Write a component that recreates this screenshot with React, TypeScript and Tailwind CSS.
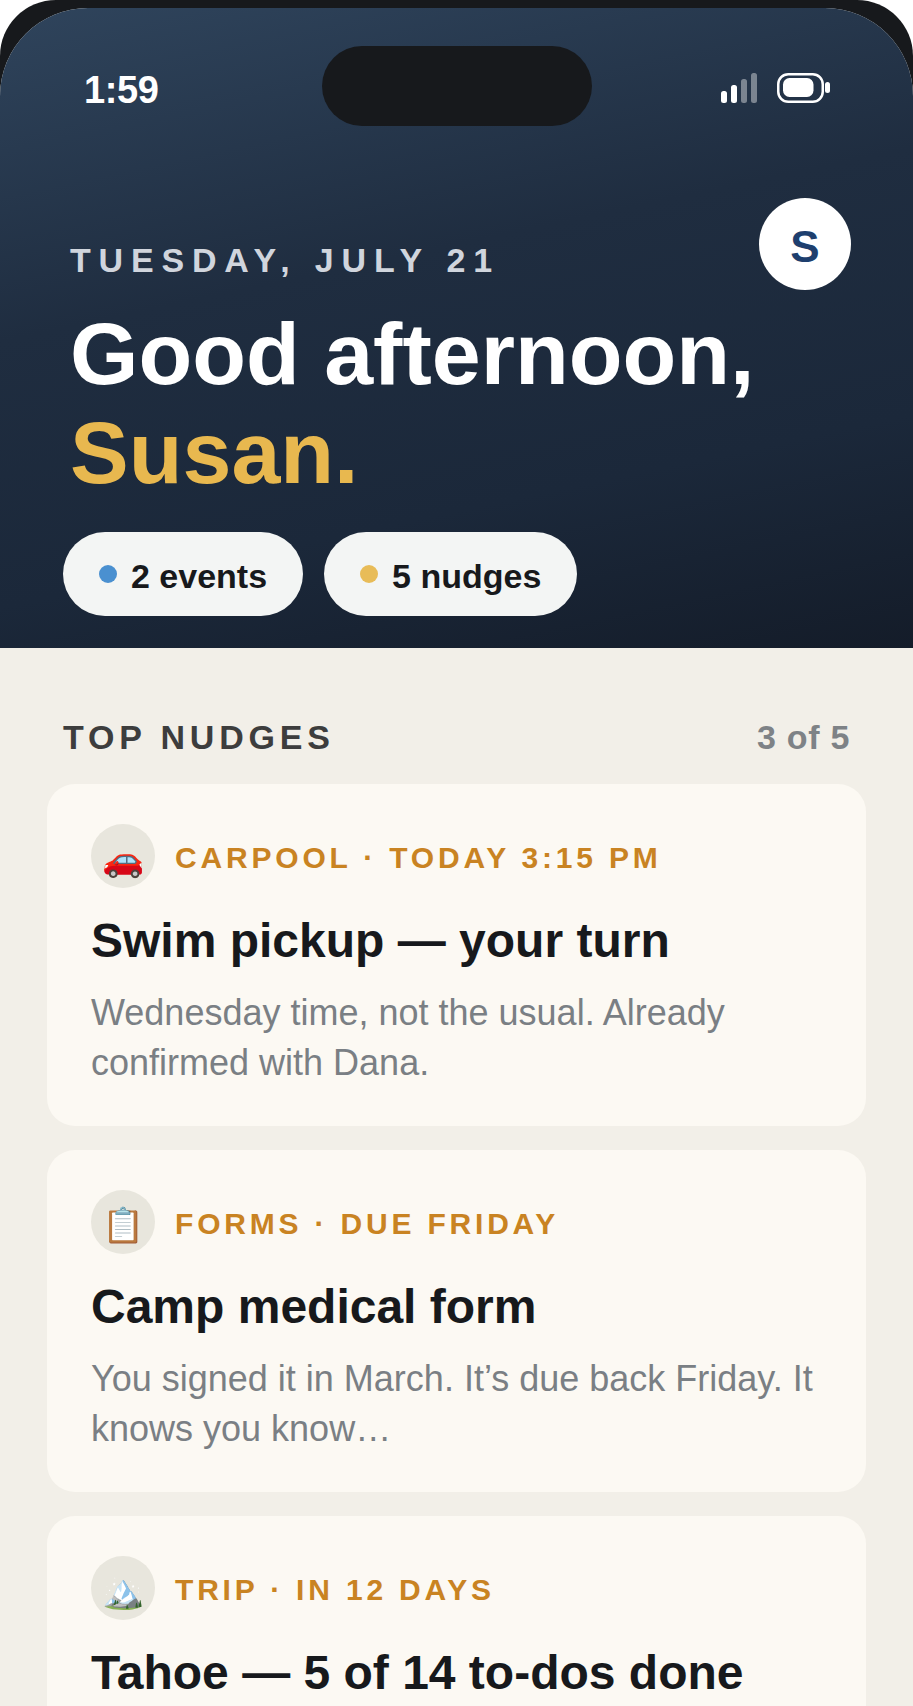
const FONT = "font-['Liberation_Sans',Arial,sans-serif]";

const nudges = [
  {
    emoji: "🚗",
    label: "CARPOOL · TODAY 3:15 PM",
    title: "Swim pickup — your turn",
    body: "Wednesday time, not the usual. Already confirmed with Dana.",
  },
  {
    emoji: "📋",
    label: "FORMS · DUE FRIDAY",
    title: "Camp medical form",
    body: "You signed it in March. It’s due back Friday. It knows you know…",
  },
  {
    emoji: "🏔️",
    label: "TRIP · IN 12 DAYS",
    title: "Tahoe — 5 of 14 to-dos done",
  },
];

function StatusIcons() {
  return (
    <div className="mt-0.5 flex items-start">
      <svg width="36" height="30" viewBox="0 0 36 30" fill="#fff">
        <rect x="0" y="18" width="6" height="12" rx="2.5" />
        <rect x="10" y="12" width="6" height="18" rx="2.5" />
        <rect x="20" y="6" width="6" height="24" rx="2.5" opacity="0.4" />
        <rect x="30" y="0" width="6" height="30" rx="2.5" opacity="0.4" />
      </svg>
      <svg className="ml-5" width="53" height="30" viewBox="0 0 53 30" fill="none">
        <rect x="1.25" y="1.25" width="44.5" height="27.5" rx="10" stroke="#fff" strokeWidth="2.5" />
        <rect x="6" y="5" width="30.5" height="19" rx="6.5" fill="#fff" />
        <rect x="48" y="9" width="5" height="11" rx="2.5" fill="#fff" />
      </svg>
    </div>
  );
}

function Pill({ dot, text }: { dot: string; text: string }) {
  return (
    <div className="flex h-[84px] items-center gap-[14px] rounded-full bg-[#f3f5f4] px-9 text-[34px] font-bold text-[#17191c]">
      <span className={`h-[18px] w-[18px] rounded-full ${dot}`} />
      <span className="pt-1">{text}</span>
    </div>
  );
}

function NudgeCard({ emoji, label, title, body }: { emoji: string; label: string; title: string; body?: string }) {
  return (
    <div className="rounded-[28px] bg-[#fcf9f3] px-11 pb-[38px] pt-10">
      <div className="flex items-center gap-5">
        <div className="flex h-16 w-16 items-center justify-center rounded-full bg-[#e8e6dd] pt-1.5 text-[34px] leading-none">
          {emoji}
        </div>
        <span className="pt-[3px] text-[30px] font-bold tracking-[0.127em] text-[#c98322]">{label}</span>
      </div>
      <h2 className="mt-[23px] text-[48px] font-bold leading-[60px] text-[#17191c]">{title}</h2>
      {body && <p className="mt-[17px] text-[36px] leading-[50px] text-[#7a7f84]">{body}</p>}
    </div>
  );
}

export default function App() {
  return (
    <div className={`h-[1706px] w-[913px] overflow-hidden bg-white ${FONT}`}>
      <div className="h-full overflow-hidden rounded-t-[56px] bg-[#17191c] pt-2">
        <div className="h-full overflow-hidden rounded-t-[88px] bg-[#f2efe8]">
          <header className="relative h-[640px] bg-[linear-gradient(168deg,#2f445c_0%,#1f2d40_40%,#1b283a_72%,#141c29_100%)] pl-[70px] text-white">
            <div className="absolute left-[322px] top-[38px] h-20 w-[270px] rounded-full bg-[#17191c]" />
            <div className="flex items-start justify-between pl-3.5 pr-[83px] pt-[63px]">
              <span className="text-[38px] font-bold leading-[38px] tracking-[-0.01em]">1:59</span>
              <StatusIcons />
            </div>
            <div className="absolute right-[62px] top-[190px] flex h-[92px] w-[92px] items-center justify-center rounded-full bg-white pt-[5px] text-[44px] font-bold text-[#1e3f6e]">
              S
            </div>
            <p className="mt-[131px] text-[34px] font-bold leading-[40px] tracking-[0.23em] text-[#d0d5dd]">
              TUESDAY, JULY 21
            </p>
            <h1 className="mt-6 text-[88px] font-bold leading-[99px]">
              Good afternoon,
              <br />
              <span className="text-[#e8b84f]">Susan.</span>
            </h1>
            <div className="-ml-[7px] mt-[30px] flex gap-[21px]">
              <Pill dot="bg-[#4a90d0]" text="2 events" />
              <Pill dot="bg-[#e8bc58]" text="5 nudges" />
            </div>
          </header>
          <main className="px-[47px]">
            <div className="flex items-center justify-between px-4 pt-16">
              <span className="text-[34px] font-bold tracking-[0.142em] text-[#3d3d3d]">TOP NUDGES</span>
              <span className="text-[34px] font-bold tracking-[0.02em] text-[#7e8286]">3 of 5</span>
            </div>
            <div className="mt-[21px] flex flex-col gap-6">
              {nudges.map((n) => (
                <NudgeCard key={n.label} {...n} />
              ))}
            </div>
          </main>
        </div>
      </div>
    </div>
  );
}
